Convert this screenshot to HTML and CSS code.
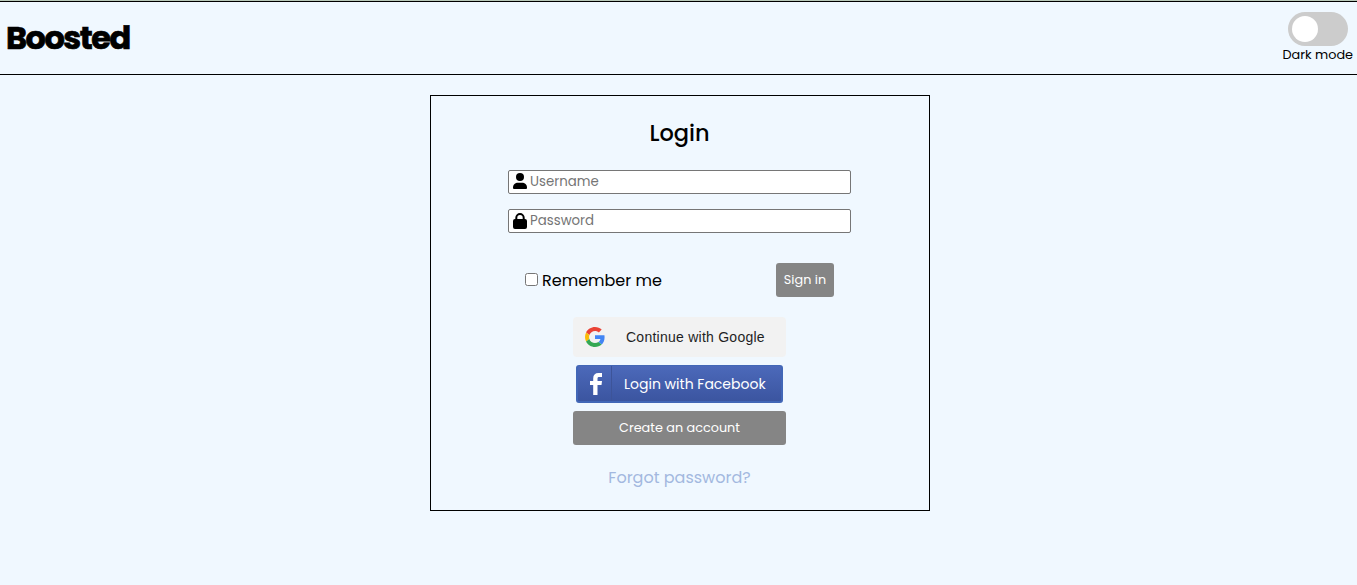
FILE: index.html
```html
<!DOCTYPE html>
<html lang="en">
<head>
<meta charset="utf-8">
<title>Boosted</title>
<link rel="stylesheet" href="styles.css">
</head>
<body>
<header class="header">
  <div class="logo">Boosted</div>
  <div class="theme">
    <div class="switch"><span class="knob"></span></div>
    <div class="theme-label">Dark mode</div>
  </div>
</header>
<main class="card">
  <h1 class="title">Login</h1>
  <label class="field">
    <svg class="field-icon user-icon" viewBox="0 0 14 16"><circle cx="7" cy="4" r="4"/><path d="M0 15V14.500C0 11.500 2.200 9.800 5 9.800H9C11.800 9.800 14 11.500 14 14.500V15Q14 16 13 16H1Q0 16 0 15Z"/></svg>
    <input class="input username" type="text" placeholder="Username">
  </label>
  <label class="field">
    <svg class="field-icon" viewBox="0 0 14 16"><path fill-rule="evenodd" d="M2.300 6V4.700a4.700 4.700 0 0 1 9.400 0V6H12a2 2 0 0 1 2 2v6a2 2 0 0 1-2 2H2a2 2 0 0 1-2-2V8a2 2 0 0 1 2-2ZM4.300 6h5.400V4.700a2.700 2.700 0 0 0-5.400 0Z"/></svg>
    <input class="input password" type="password" placeholder="Password">
  </label>
  <div class="row">
    <label class="remember"><input class="check" type="checkbox"><span>Remember me</span></label>
    <button class="btn signin">Sign in</button>
  </div>
  <button class="btn google">
    <svg class="google-icon" viewBox="0 0 48 48"><path fill="#EA4335" d="M24 9.500c3.540 0 6.710 1.220 9.210 3.600l6.850-6.850C35.900 2.380 30.470 0 24 0 14.620 0 6.510 5.380 2.560 13.220l7.980 6.190C12.430 13.720 17.740 9.500 24 9.500z"/><path fill="#4285F4" d="M46.980 24.550c0-1.570-.15-3.090-.38-4.550H24v9.020h12.940c-.58 2.960-2.260 5.480-4.780 7.180l7.730 6c4.510-4.180 7.090-10.360 7.090-17.650z"/><path fill="#FBBC05" d="M10.530 28.590c-.48-1.450-.76-2.990-.76-4.590s.27-3.140.76-4.590l-7.980-6.190C.92 16.460 0 20.120 0 24c0 3.880.92 7.540 2.560 10.780l7.970-6.190z"/><path fill="#34A853" d="M24 48c6.480 0 11.930-2.130 15.890-5.810l-7.730-6c-2.150 1.450-4.920 2.300-8.160 2.300-6.260 0-11.570-4.220-13.470-9.910l-7.980 6.190C6.510 42.620 14.620 48 24 48z"/></svg>
    <span class="google-text">Continue with Google</span>
  </button>
  <button class="btn facebook">
    <span class="fb-mark"><svg class="fb-icon" viewBox="0 0 12 22"><path d="M3.200 22V12H0V8h3.200V5.400C3.200 1.900 5.100 0 8.500 0H12v3.900H9.600C8 3.900 7.500 4.300 7.500 5.700V8H12l-.5 4h-4V22Z"/></svg></span>
    <span class="fb-text">Login with Facebook</span>
  </button>
  <button class="btn create">Create an account</button>
  <a class="forgot">Forgot password?</a>
</main>
</body>
</html>
```
FILE: styles.css
```css
* { box-sizing: border-box; }
body {
  margin: 0;
  height: 585px;
  overflow: hidden;
  background: #f0f8ff;
  color: #000;
  font-family: Poppins, Inter, sans-serif;
}
.header {
  height: 75px;
  border-top: 1px solid #b9c9b9;
  border-bottom: 1px solid #000;
  box-shadow: inset 0 1px #000;
  display: flex;
  justify-content: space-between;
  padding: 11px 4px 0 6px;
}
.logo {
  font-size: 32px;
  line-height: 51px;
  font-weight: 700;
  letter-spacing: -1.5px;
  -webkit-text-stroke: .7px #000;
}
.theme { display: flex; flex-direction: column; align-items: flex-end; }
.switch {
  width: 60px;
  height: 34px;
  margin-right: 5px;
  padding: 4px;
  border-radius: 17px;
  background: #ccc;
}
.knob { display: block; width: 26px; height: 26px; border-radius: 50%; background: #fff; }
.theme-label { font-size: 12.8px; line-height: 18px; white-space: nowrap; }
.card {
  width: 500px;
  height: 416px;
  margin: 20px 0 0 430px;
  border: 1px solid #000;
  display: flex;
  flex-direction: column;
  align-items: center;
}
.title {
  margin: 19px 1px 0 0;
  height: 55px;
  font-size: 22.5px;
  line-height: 36px;
  font-weight: 500;
}
.field {
  width: 343px;
  height: 24px;
  margin: 0 1px 15px 0;
  padding: 0 4px;
  border: 1px solid #767676;
  border-radius: 2px;
  background: #fff;
  display: flex;
  align-items: center;
}
.field-icon { width: 14px; height: 16px; flex: none; }
.user-icon { margin-bottom: 2px; }
.input {
  flex: 1;
  min-width: 0;
  height: 20px;
  padding: 0;
  margin-left: 3px;
  border: 0;
  outline: 0;
  background: none;
  font: 13.33px Poppins, Inter, sans-serif;
}
.input::placeholder { color: #757575; }
.row {
  width: 309px;
  height: 34px;
  margin: 15px 1px 20px 0;
  display: flex;
  justify-content: space-between;
  align-items: center;
}
.remember { display: flex; align-items: center; gap: 4px; font-size: 16px; }
.check { margin: 0 0 2px; width: 13px; height: 13px; }
.btn {
  margin: 0 1px 0 0;
  padding: 0;
  border: 0;
  border-radius: 3px;
  background: #858585;
  color: #fff;
  font: 400 12.8px Poppins, Inter, sans-serif;
  white-space: nowrap;
}
.signin { width: 58px; height: 34px; margin: 0; }
.google {
  width: 213px;
  height: 40px;
  padding-left: 12px;
  border-radius: 4px;
  background: #f2f2f2;
  color: #1f1f1f;
  display: flex;
  align-items: center;
}
.google-icon { width: 20px; height: 20px; margin-right: 21px; }
.google-text { font: 14px "Liberation Sans", sans-serif; letter-spacing: .25px; }
.facebook {
  width: 207px;
  height: 38px;
  margin-top: 8px;
  border: 2px solid #4267b7;
  border-top-width: 1px;
  background: linear-gradient(#4c69ba, #3b55a0);
  display: flex;
  align-items: center;
}
.fb-mark {
  width: 34px;
  height: 35px;
  padding-left: 12px;
  border-right: 1px solid #3d5499;
  display: flex;
  align-items: center;
}
.fb-icon { width: 12px; height: 22px; fill: #fff; }
.fb-text { margin-left: 12px; padding-top: 1px; font-size: 14px; }
.create { width: 213px; height: 34px; margin-top: 8px; }
.forgot { margin: 21px 1px 0 0; font-size: 16px; line-height: 24px; color: #a3b8e0; }
```
